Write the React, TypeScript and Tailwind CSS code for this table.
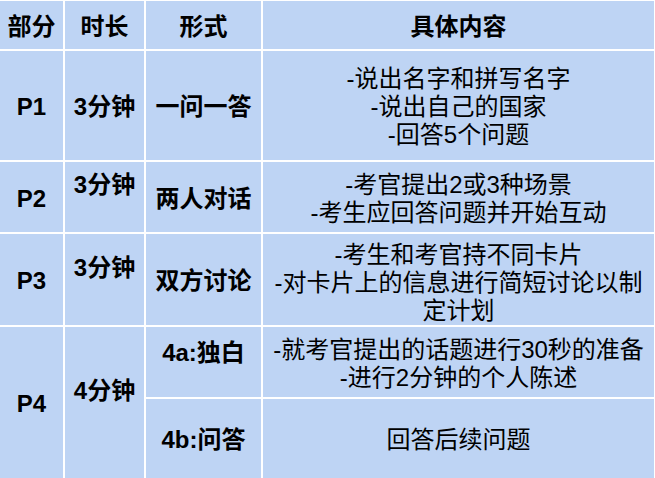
import React from "react";

const font = { fontFamily: '"Liberation Sans", "Noto Sans CJK SC", sans-serif' };

const cell = "bg-[#bed4f4] flex items-center justify-center text-center text-black pt-[3px]";

function Lines({ lines }: { lines: string[] }) {
    return (
        <div className="flex flex-col items-center">
            {lines.map((l) => (
                <div key={l} className="whitespace-nowrap">{l}</div>
            ))}
        </div>
    );
}

export default function App() {
    return (
        <div
            className="w-[655px] h-[478px] bg-white pt-[1px] pr-[1px] grid grid-cols-[63px_79px_115px_391px] grid-rows-[48px_109px_70px_91px_70px_79px] gap-[2px] text-[24px] leading-[28px]"
            style={font}
        >
            {/* header */}
            <div className={`${cell} font-bold`}>部分</div>
            <div className={`${cell} font-bold`}>时长</div>
            <div className={`${cell} font-bold`}>形式</div>
            <div className={`${cell} font-bold`}>具体内容</div>

            {/* P1 */}
            <div className={`${cell} font-bold`}>P1</div>
            <div className={`${cell} font-bold`}>3分钟</div>
            <div className={`${cell} font-bold`}>一问一答</div>
            <div className={cell}>
                <Lines lines={["-说出名字和拼写名字", "-说出自己的国家", "-回答5个问题"]} />
            </div>

            {/* P2 */}
            <div className={`${cell} font-bold`}>P2</div>
            <div className={`${cell} font-bold pb-[27px]`}>3分钟</div>
            <div className={`${cell} font-bold`}>两人对话</div>
            <div className={cell}>
                <Lines lines={["-考官提出2或3种场景", "-考生应回答问题并开始互动"]} />
            </div>

            {/* P3 */}
            <div className={`${cell} font-bold`}>P3</div>
            <div className={`${cell} font-bold pb-[27px]`}>3分钟</div>
            <div className={`${cell} font-bold`}>双方讨论</div>
            <div className={`${cell} pt-[6px]`}>
                <Lines lines={["-考生和考官持不同卡片", "-对卡片上的信息进行简短讨论以制", "定计划"]} />
            </div>

            {/* P4 */}
            <div className={`${cell} font-bold row-span-2`}>P4</div>
            <div className={`${cell} font-bold row-span-2 pb-[27px]`}>4分钟</div>
            <div className={`${cell} font-bold pb-[22px]`}>4a:独白</div>
            <div className={cell}>
                <Lines lines={["-就考官提出的话题进行30秒的准备", "-进行2分钟的个人陈述"]} />
            </div>
            <div className={`${cell} font-bold`}>4b:问答</div>
            <div className={cell}>回答后续问题</div>
        </div>
    );
}
